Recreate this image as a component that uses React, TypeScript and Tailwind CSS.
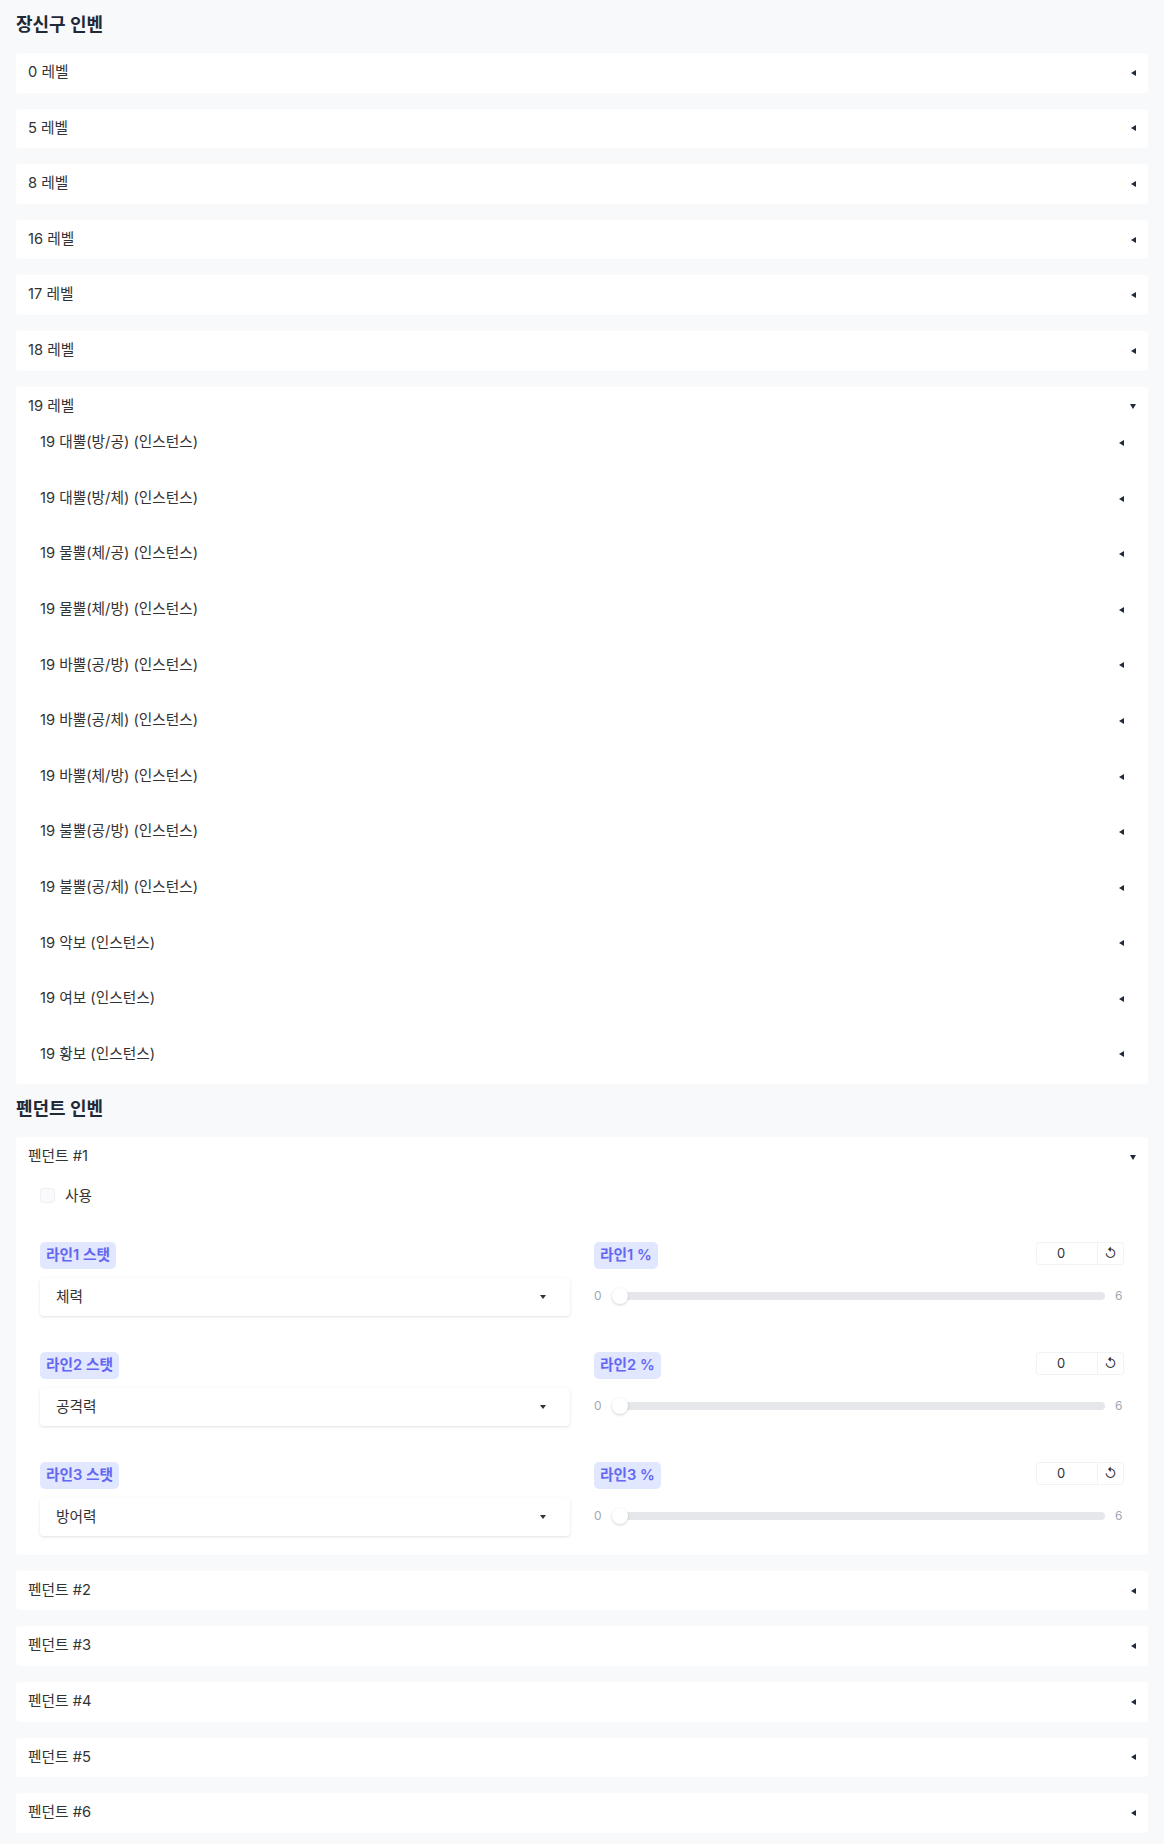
import React from "react";

const levels = ["0 레벨", "5 레벨", "8 레벨", "16 레벨", "17 레벨", "18 레벨"];

const level19 = [
  "19 대뿔(방/공) (인스턴스)",
  "19 대뿔(방/체) (인스턴스)",
  "19 물뿔(체/공) (인스턴스)",
  "19 물뿔(체/방) (인스턴스)",
  "19 바뿔(공/방) (인스턴스)",
  "19 바뿔(공/체) (인스턴스)",
  "19 바뿔(체/방) (인스턴스)",
  "19 불뿔(공/방) (인스턴스)",
  "19 불뿔(공/체) (인스턴스)",
  "19 악보 (인스턴스)",
  "19 여보 (인스턴스)",
  "19 황보 (인스턴스)",
];

const lines = [
  { n: 1, stat: "체력" },
  { n: 2, stat: "공격력" },
  { n: 3, stat: "방어력" },
];

function Caret({ open }: { open?: boolean }) {
  if (open) {
    return (
      <svg width="6" height="5" viewBox="0 0 6 5" className="shrink-0">
        <polygon points="0,0 6,0 3,5" fill="#1f2937" />
      </svg>
    );
  }
  return (
    <svg width="5" height="6" viewBox="0 0 5 6" className="shrink-0">
      <polygon points="5,0 5,6 0,3" fill="#1f2937" />
    </svg>
  );
}

function Panel({ label, open, children }: { label: string; open?: boolean; children?: React.ReactNode }) {
  return (
    <div className="bg-white rounded-[4px] px-3 py-[10px]">
      <div className="flex items-center justify-between text-[14.7px] leading-[19.6px] text-[#333]">
        <span>{label}</span>
        <Caret open={open} />
      </div>
      {open && children}
    </div>
  );
}

function Badge({ text }: { text: string }) {
  return (
    <span className="inline-flex h-[27px] items-center rounded-[5px] bg-[#e0e7ff] px-[6px] text-[14.7px] font-semibold text-[#6366f1]">
      {text}
    </span>
  );
}

function LineRow({ n, stat }: { n: number; stat: string }) {
  return (
    <div className="grid grid-cols-2 gap-x-6 rounded-[4px] px-3 py-[9px]">
      <div className="flex flex-col gap-[9px]">
        <div>
          <Badge text={`라인${n} 스탯`} />
        </div>
        <div className="flex h-[38px] items-center justify-between rounded-[4px] bg-white pl-4 pr-6 text-[14.7px] text-[#333] shadow-[0_1px_3px_rgba(0,0,0,0.12)]">
          <span>{stat}</span>
          <svg width="6" height="4" viewBox="0 0 6 4">
            <polygon points="0,0 6,0 3,4" fill="#333" />
          </svg>
        </div>
      </div>
      <div className="flex flex-col">
        <div className="flex items-start justify-between">
          <Badge text={`라인${n} %`} />
          <div className="flex h-[23px] w-[88px] items-center rounded-[3px] border border-[#f1f2f4] text-[13px] text-[#333]">
            <span className="flex h-full w-[61px] items-center justify-center border-r border-[#f1f2f4] pr-[12px]">0</span>
            <span className="flex h-full flex-1 items-center justify-center text-[13px]">↺</span>
          </div>
        </div>
        <div className="mt-[19px] flex h-[16px] items-center text-[12px] text-[#a3a7b0]">
          <span className="w-[20px]">0</span>
          <div className="relative h-[8px] flex-1 rounded-full bg-[#e5e7eb]">
            <div className="absolute left-[-2px] top-[-4px] h-[16px] w-[16px] rounded-full bg-white shadow-[0_1px_3px_rgba(0,0,0,0.18)]" />
          </div>
          <span className="ml-[10px] w-[9px]">6</span>
        </div>
      </div>
    </div>
  );
}

export default function App() {
  return (
    <div className="min-h-[1844px] bg-[#f8f9fb] px-4 pb-[11px] font-['Inter','Noto_Sans_CJK_KR',sans-serif]">
      <section className="pt-[12px]">
        <h2 className="mb-4 text-[18px] font-bold leading-[25px] text-[#1f2937]">장신구 인벤</h2>
        <div className="flex flex-col gap-4">
          {levels.map((l) => (
            <Panel key={l} label={l} />
          ))}
          <Panel label="19 레벨" open>
            <div className="mt-[7px] flex flex-col gap-4">
              {level19.map((s) => (
                <div key={s} className="flex items-center justify-between px-3 py-[10px] text-[14.7px] leading-[19.6px] text-[#333]">
                  <span>{s}</span>
                  <Caret />
                </div>
              ))}
            </div>
          </Panel>
        </div>
      </section>

      <section className="pt-[12px]">
        <h2 className="mb-4 text-[18px] font-bold leading-[25px] text-[#1f2937]">펜던트 인벤</h2>
        <div className="flex flex-col gap-4">
          <Panel label="펜던트 #1" open>
            <div className="mt-[10px] flex flex-col gap-[18px]">
              <div className="flex h-[38px] items-center gap-[10px] px-3 text-[14.7px] text-[#333]">
                <span className="h-[15px] w-[15px] rounded-[3px] border border-[#eef0f3] bg-[#f9fafb]" />
                <span>사용</span>
              </div>
              {lines.map((l) => (
                <LineRow key={l.n} n={l.n} stat={l.stat} />
              ))}
            </div>
          </Panel>
          {[2, 3, 4, 5, 6].map((n) => (
            <Panel key={n} label={`펜던트 #${n}`} />
          ))}
        </div>
      </section>
    </div>
  );
}
